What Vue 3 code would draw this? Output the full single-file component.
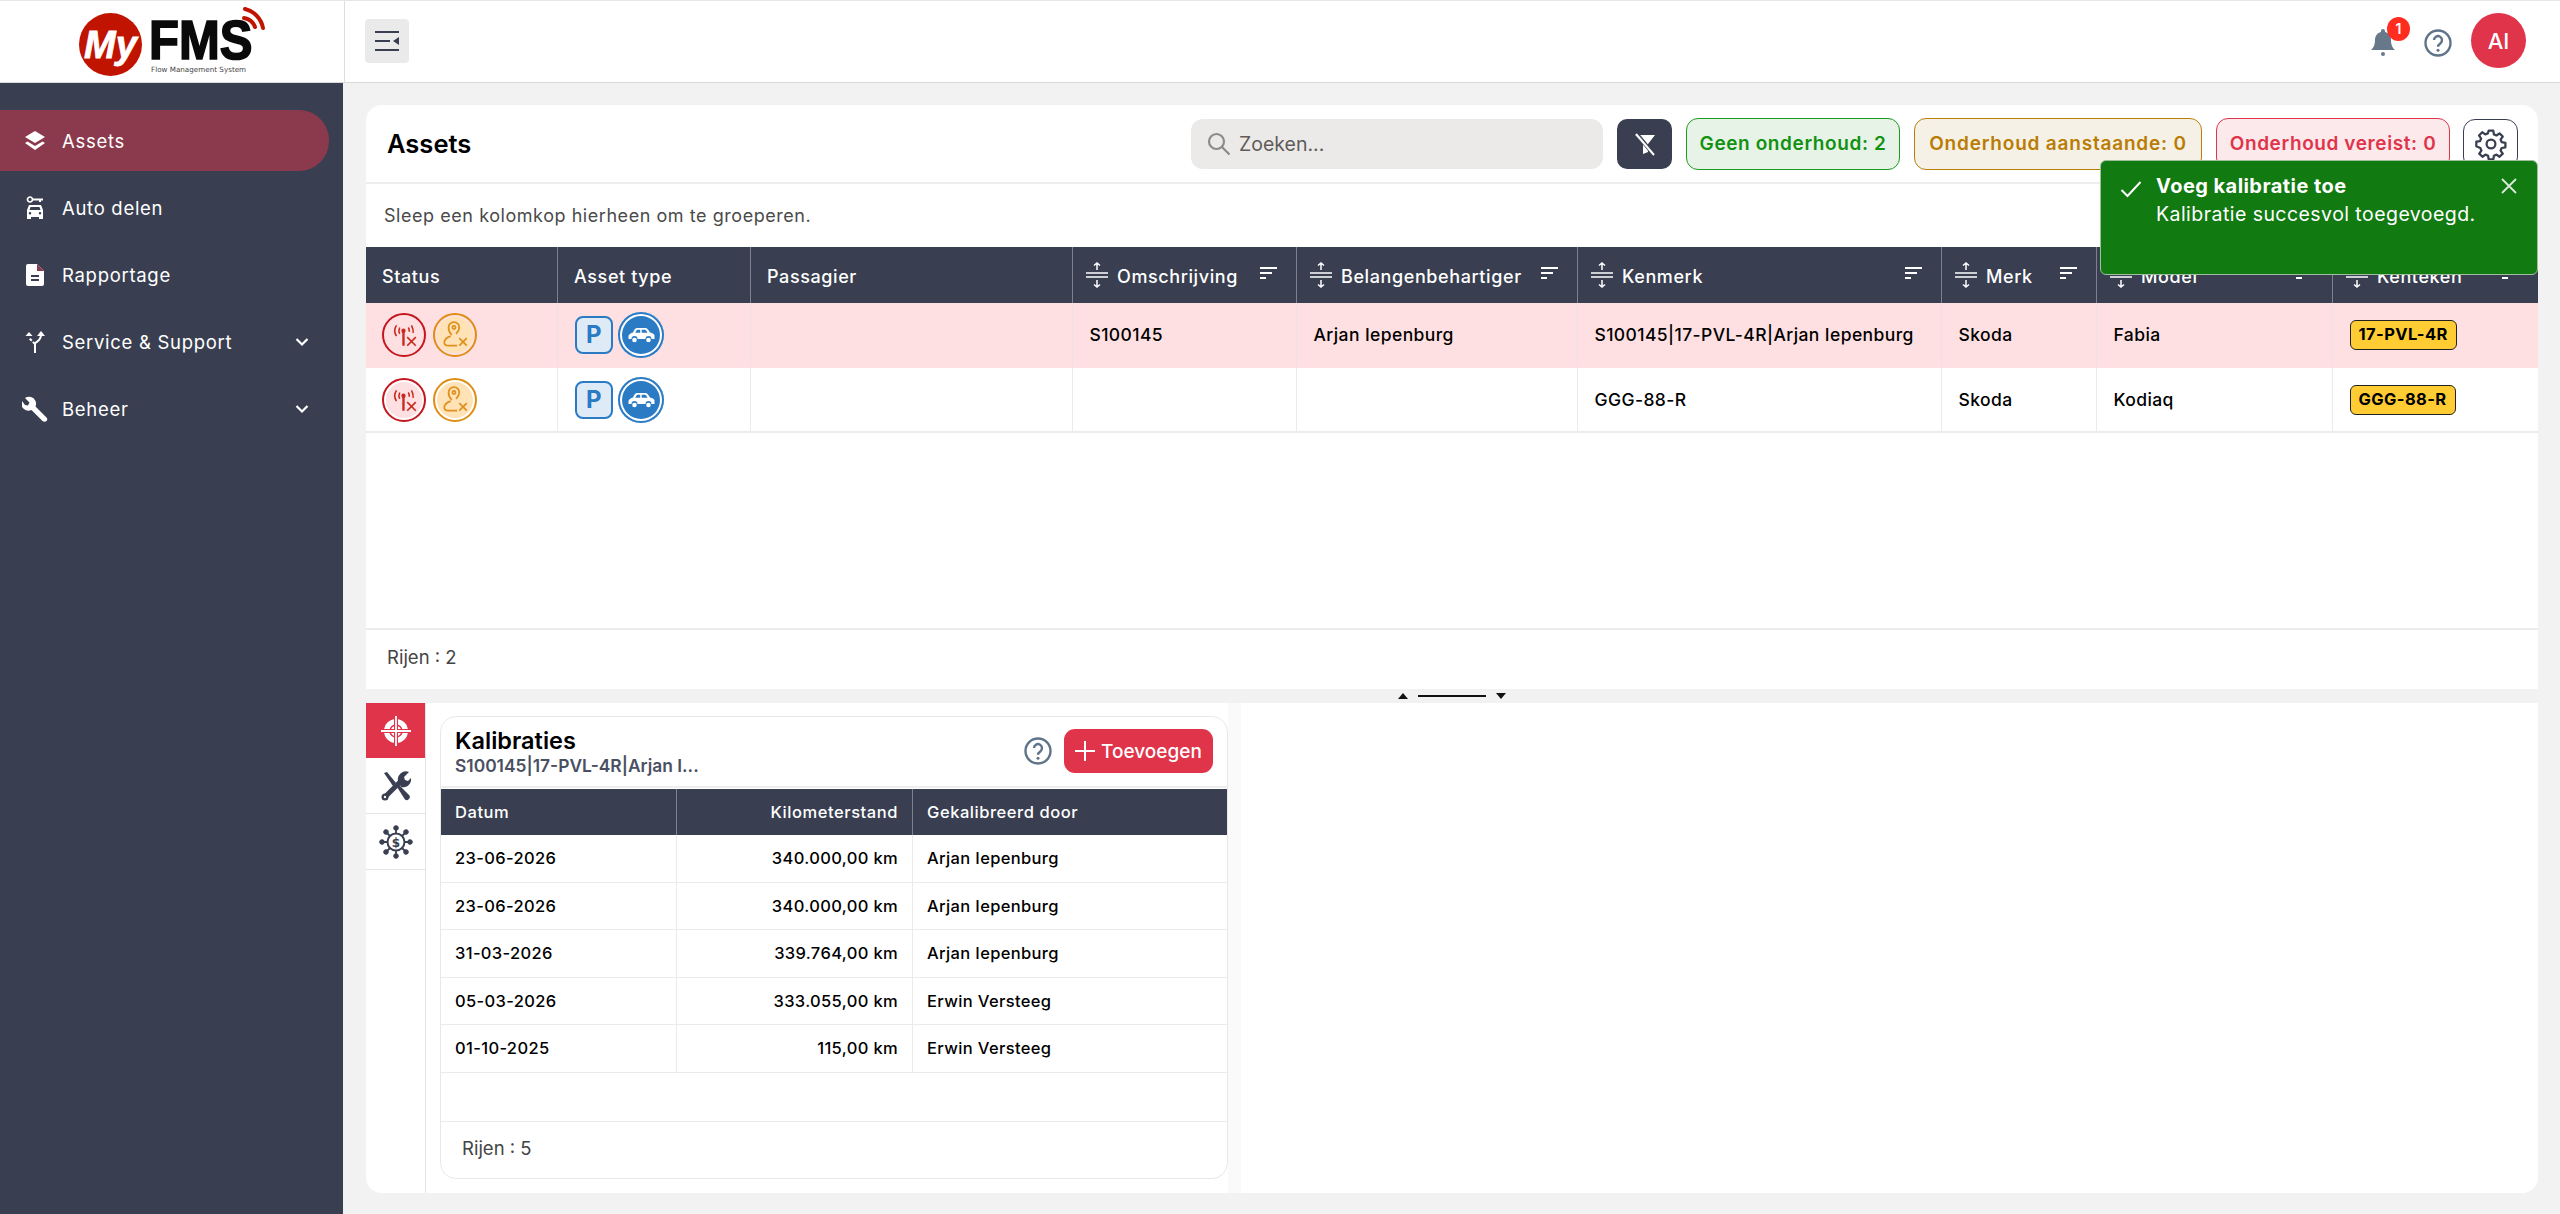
<script setup>
const nav = [
  { label: 'Assets', icon: 'layers', active: true },
  { label: 'Auto delen', icon: 'car' },
  { label: 'Rapportage', icon: 'file' },
  { label: 'Service & Support', icon: 'split', chevron: true },
  { label: 'Beheer', icon: 'wrench', chevron: true }
]
const columns = [
  { label: 'Status' }, { label: 'Asset type' }, { label: 'Passagier' },
  { label: 'Omschrijving', tools: true }, { label: 'Belangenbehartiger', tools: true },
  { label: 'Kenmerk', tools: true }, { label: 'Merk', tools: true },
  { label: 'Model', tools: true }, { label: 'Kenteken', tools: true }
]
const assets = [
  { oms: 'S100145', bel: 'Arjan Iepenburg', ken: 'S100145|17-PVL-4R|Arjan Iepenburg', merk: 'Skoda', model: 'Fabia', plate: '17-PVL-4R', alert: true },
  { oms: '', bel: '', ken: 'GGG-88-R', merk: 'Skoda', model: 'Kodiaq', plate: 'GGG-88-R', alert: false }
]
const calibrations = [
  ['23-06-2026', '340.000,00 km', 'Arjan Iepenburg'],
  ['23-06-2026', '340.000,00 km', 'Arjan Iepenburg'],
  ['31-03-2026', '339.764,00 km', 'Arjan Iepenburg'],
  ['05-03-2026', '333.055,00 km', 'Erwin Versteeg'],
  ['01-10-2025', '115,00 km', 'Erwin Versteeg']
]
</script>

<template>
  <div class="app">
    <header class="topbar">
      <div class="logo">
        <span class="logo-circle"><span class="logo-my">My</span></span>
        <span class="logo-words">
          <span class="logo-fms">FMS</span>
          <span class="logo-tag">Flow Management System</span>
        </span>
        <svg class="logo-wifi" width="24" height="24" viewBox="0 0 24 24"><path d="M2 11a14 14 0 0 1 11 9M3 2a24 24 0 0 1 18 19" fill="none" stroke="#c01400" stroke-width="4" stroke-linecap="round" /></svg>
      </div>
      <div class="topbar-main">
        <button class="toggle">
          <svg width="24" height="24" viewBox="0 0 24 24"><path d="M0 2h24v2H0zM0 11h15v2H0zM0 20h24v2H0z" fill="#393f51" /><path d="M24 8v8l-6-4z" fill="#393f51" /></svg>
        </button>
        <div class="topbar-right">
          <span class="bell">
            <svg width="24" height="28" viewBox="0 0 24 28"><path d="M12 1a2 2 0 0 1 2 2v1c4 1 6 4 6 8 0 6 2 8 4 10H0c2-2 4-4 4-10 0-4 2-7 6-8V3a2 2 0 0 1 2-2z" fill="#66788a" /><circle cx="12" cy="26" r="2" fill="#66788a" /></svg>
            <span class="badge">1</span>
          </span>
          <svg class="help" width="28" height="28" viewBox="0 0 28 28"><circle cx="14" cy="14" r="12.500" fill="none" stroke="#5f7488" stroke-width="2.400" /><path d="M10 11a4 4 0 1 1 6.500 3.200c-1.600 1.200-2.500 2-2.500 3.600" fill="none" stroke="#5f7488" stroke-width="2.400" /><circle cx="14" cy="21.300" r="1.500" fill="#5f7488" /></svg>
          <span class="avatar">AI</span>
        </div>
      </div>
    </header>

    <div class="body">
      <nav class="sidebar">
        <a v-for="n in nav" :key="n.label" class="nav-item" :class="{ active: n.active }">
          <span class="nav-icon">
            <svg v-if="n.icon === 'layers'" width="22" height="22" viewBox="0 0 22 22" fill="#fff"><path d="M11 1l10 6-10 6L1 7z" /><path d="M3.500 11.500L11 16l7.500-4.500L21 13l-10 7L1 13z" /></svg>
            <svg v-else-if="n.icon === 'car'" width="18" height="24" viewBox="0 0 18 24" fill="#fff"><circle cx="4" cy="3.500" r="2.500" fill="none" stroke="#fff" stroke-width="1.700" /><path d="M6 2.500h11v2h-2v1.500h-2V4.500H6z" /><path d="M3 9h12l2 5v9h-4v-2H5v2H1v-9zM4.500 11l-1 3h11l-1-3zM4 16a1 1 0 1 0 0 2.500A1 1 0 0 0 4 16zm10 0a1 1 0 1 0 0 2.500A1 1 0 0 0 14 16z" fill-rule="evenodd" /></svg>
            <svg v-else-if="n.icon === 'file'" width="18" height="22" viewBox="0 0 18 22"><path d="M2 0h9l7 7v13a2 2 0 0 1-2 2H2a2 2 0 0 1-2-2V2a2 2 0 0 1 2-2z" fill="#fff" /><path d="M11 0v7h7z" fill="#8a3a4c" /><path d="M5 11h8v2H5zM5 15h8v2H5z" fill="#393f51" /></svg>
            <svg v-else-if="n.icon === 'split'" width="20" height="22" viewBox="0 0 20 22" fill="none" stroke="#fff" stroke-width="2"><path d="M10 22v-9c0-2 6-3 6-9" /><path d="M10 13L4 7" stroke-dasharray="3 1.500" /><path d="M16 0l4 5h-8z" fill="#fff" stroke="none" /><path d="M4 1l3.500 4h-7z" fill="#fff" stroke="none" /></svg>
            <svg v-else width="26" height="26" viewBox="0 0 26 26" fill="#fff"><path d="M9 1a7 7 0 0 0-6 1l4.500 4.500-1.500 3-3-.5L0 5a7 7 0 0 0 9.500 9l11 11c1 1 3 1 4 0s1-2.500 0-3.500l-11-11A7 7 0 0 0 9 1z" /></svg>
          </span>
          <span class="nav-label">{{ n.label }}</span>
          <svg v-if="n.chevron" class="chev" width="14" height="10" viewBox="0 0 14 10"><path d="M1.500 2L7 7.500 12.500 2" fill="none" stroke="#fff" stroke-width="2.200" /></svg>
        </a>
      </nav>

      <main class="content">
        <section class="assets-card">
          <div class="assets-head">
            <h1>Assets</h1>
            <div class="tools">
              <label class="search">
                <svg width="24" height="24" viewBox="0 0 24 24" fill="none" stroke="#8b8b8b" stroke-width="2.200"><circle cx="9.500" cy="9.500" r="7.500" /><path d="M15 15l7.500 7.500" /></svg>
                <span>Zoeken...</span>
              </label>
              <button class="filter">
                <svg width="24" height="24" viewBox="0 0 24 24"><path d="M2 3h20l-7 9v8l-5 2v-10z" fill="#fff" /><path d="M3 1l18 22" stroke="#393f51" stroke-width="4" /><path d="M3 2l18 21" stroke="#fff" stroke-width="2" /></svg>
              </button>
              <span class="chip green">Geen onderhoud: 2</span>
              <span class="chip amber">Onderhoud aanstaande: 0</span>
              <span class="chip red">Onderhoud vereist: 0</span>
              <button class="gear">
                <svg width="32" height="32" viewBox="0 0 24 24" fill="none" stroke="#393f51" stroke-width="1.700"><circle cx="12" cy="12" r="3.300" /><path d="M10.300 2h3.400l.5 2.800 1.900.8 2.300-1.600 2.400 2.400-1.600 2.300.8 1.900 2.800.5v3.400l-2.800.5-.8 1.900 1.600 2.300-2.400 2.400-2.300-1.600-1.900.8-.5 2.800h-3.400l-.5-2.800-1.900-.8-2.300 1.600-2.400-2.400 1.600-2.300-.8-1.900L1 13.700v-3.400l2.800-.5.8-1.900L3 5.600 5.400 3.200l2.300 1.600 1.900-.8z" stroke-linejoin="round" /></svg>
              </button>
            </div>
          </div>
          <div class="group-hint">Sleep een kolomkop hierheen om te groeperen.</div>

          <div class="grid-row grid-head">
            <div v-for="c in columns" :key="c.label" class="hcell">
              <svg v-if="c.tools" class="collapse" width="22" height="26" viewBox="0 0 22 26" fill="none" stroke="#fff" stroke-width="1.500"><path d="M0 11h22M0 15h22M11 8V1M8 3.500L11 1l3 2.500M11 18v7M8 22.500l3 2.500 3-2.500" /></svg>
              <span>{{ c.label }}</span>
              <svg v-if="c.tools" class="sort" width="17" height="14" viewBox="0 0 17 14"><path d="M0 1h17v2H0zM0 6h12v2H0zM0 11h6v2H0z" fill="#fff" /></svg>
            </div>
          </div>
          <div v-for="a in assets" :key="a.plate" class="grid-row data-row" :class="{ alert: a.alert }">
            <div class="cell icons">
              <span class="status s-red">
                <svg width="30" height="30" viewBox="0 0 28 28" fill="none" stroke="#c92a20" stroke-width="1.500"><path d="M7 5c-2 3-2 7 0 10M10 7c-1 2-1 4 0 6M21 5c1 2 2 4 1.500 7M18 7c.7 1 1 2 1 4" /><circle cx="13.500" cy="10" r="1.300" fill="#c92a20" /><path d="M13.500 11v13" stroke-width="2.200" /><path d="M17 16l8 8M25 16l-8 8" /></svg>
              </span>
              <span class="status s-amber">
                <svg width="30" height="30" viewBox="0 0 28 28" fill="none" stroke="#e0901e" stroke-width="1.600"><path d="M15 13c2-2 3-4 3-6a5 5 0 0 0-10 0c0 2 1 5 3 7" /><circle cx="13" cy="7" r="1.500" /><path d="M10 15c-3 1-6 3-6 6 0 2 2 3 4 3h8" /><path d="M18 17l7 7M25 17l-7 7" /></svg>
              </span>
            </div>
            <div class="cell icons asset-icons">
              <span class="p-box">P</span>
              <span class="car-badge">
                <svg width="27" height="16" viewBox="0 0 27 16"><path d="M9 1h8.500c1.500 0 3 2 4.500 4.500 2.500.5 4.500 1.500 4.500 3V12h-3a3 3 0 0 0-6 0H9.500a3 3 0 0 0-6 0H.500V9c0-1.500 2.500-3 4.500-3.500C6 3 7.500 1 9 1z" fill="#fff" /><path d="M9.500 2.700h2.700v3H7.300c.7-1.400 1.400-3 2.200-3zM13.700 2.700h3.300c.8 0 1.800 1.600 2.600 3h-5.900z" fill="#2a7bc4" /><circle cx="6.500" cy="13" r="2.300" fill="#fff" /><circle cx="20.500" cy="13" r="2.300" fill="#fff" /></svg>
              </span>
            </div>
            <div class="cell"></div>
            <div class="cell">{{ a.oms }}</div>
            <div class="cell">{{ a.bel }}</div>
            <div class="cell">{{ a.ken }}</div>
            <div class="cell">{{ a.merk }}</div>
            <div class="cell">{{ a.model }}</div>
            <div class="cell"><span class="plate">{{ a.plate }}</span></div>
          </div>
          <div class="assets-fill"></div>
          <div class="assets-foot">Rijen : 2</div>
        </section>

        <div class="splitter">
          <i class="tri up"></i><i class="line"></i><i class="tri down"></i>
        </div>

        <section class="detail">
          <div class="rail">
            <button class="tab on">
              <svg width="32" height="32" viewBox="0 0 32 32"><circle cx="16" cy="16" r="12" fill="#fff" /><circle cx="16" cy="16" r="6" fill="none" stroke="#e0344a" stroke-width="1.500" /><path d="M0 16h32M16 0v32" stroke="#e0344a" stroke-width="4" /><path d="M1 16h30M16 1v30" stroke="#fff" stroke-width="1.800" /></svg>
            </button>
            <button class="tab">
              <svg width="32" height="32" viewBox="0 0 32 32"><path d="M4 3l3-1 9 11-3 3z" fill="#393f51" /><path d="M17 17l2-2 10 10c1.500 1.500 1 3-.3 4.200-1.300 1.200-2.700 1.300-3.900 0z" fill="#393f51" /><path d="M5 27L22 10" stroke="#393f51" stroke-width="5" /><path d="M18 11a8 8 0 0 1 11-9l-5 5 1 3 3 1 3-3a8 8 0 0 1-10 9z" fill="#393f51" /><circle cx="5" cy="27" r="3.500" fill="#393f51" /><circle cx="5" cy="27" r="1.200" fill="#fff" /></svg>
            </button>
            <button class="tab">
              <svg width="34" height="34" viewBox="0 0 34 34" fill="#393f51" stroke="#393f51"><circle cx="17" cy="17" r="8.500" fill="none" stroke-width="2" /><path d="M17 2v7M17 25v7M2 17h7M25 17h7M6 6l5 5M23 23l5 5M28 6l-5 5M11 23l-5 5" stroke-width="1.800" /><circle cx="17" cy="3" r="2.300" /><circle cx="17" cy="31" r="2.300" /><circle cx="3" cy="17" r="2.300" /><circle cx="31" cy="17" r="2.300" /><circle cx="7" cy="7" r="2.300" /><circle cx="27" cy="27" r="2.300" /><circle cx="27" cy="7" r="2.300" /><circle cx="7" cy="27" r="2.300" /><text x="17" y="22" text-anchor="middle" class="dollar" stroke="none">$</text></svg>
            </button>
          </div>
          <div class="calib">
            <div class="calib-head">
              <div class="calib-title">
                <h2>Kalibraties</h2>
                <p>S100145|17-PVL-4R|Arjan I...</p>
              </div>
              <svg class="help" width="28" height="28" viewBox="0 0 28 28"><circle cx="14" cy="14" r="12.500" fill="none" stroke="#5f7488" stroke-width="2.400" /><path d="M10 11a4 4 0 1 1 6.500 3.200c-1.600 1.200-2.500 2-2.500 3.600" fill="none" stroke="#5f7488" stroke-width="2.400" /><circle cx="14" cy="21.300" r="1.500" fill="#5f7488" /></svg>
              <button class="add">
                <svg width="20" height="20" viewBox="0 0 20 20"><path d="M9 0h2v9h9v2h-9v9H9v-9H0V9h9z" fill="#fff" /></svg>
                Toevoegen
              </button>
            </div>
            <div class="ctable ctable-head">
              <div>Datum</div><div class="num">Kilometerstand</div><div>Gekalibreerd door</div>
            </div>
            <div v-for="(r, i) in calibrations" :key="i" class="ctable crow">
              <div>{{ r[0] }}</div><div class="num">{{ r[1] }}</div><div>{{ r[2] }}</div>
            </div>
            <div class="cempty"></div>
            <div class="cfoot">Rijen : 5</div>
          </div>
          <div class="gutter"></div>
          <div class="second"></div>
        </section>
      </main>
    </div>

    <aside class="toast">
      <svg class="check" width="22" height="18" viewBox="0 0 22 18"><path d="M1.500 10l6 6L20.500 2" fill="none" stroke="#fff" stroke-width="2" /></svg>
      <div class="toast-text">
        <strong>Voeg kalibratie toe</strong>
        <span>Kalibratie succesvol toegevoegd.</span>
      </div>
      <svg class="close" width="16" height="16" viewBox="0 0 16 16"><path d="M1 1l14 14M15 1L1 15" stroke="#fff" stroke-width="1.800" opacity=".85" /></svg>
    </aside>
  </div>
</template>

<style scoped>
.app { position: relative; height: 1214px; overflow: hidden; background: #f2f2f2; font-family: Inter, "Noto Sans", sans-serif; color: #000; }
svg { display: block; flex: none; }
button { border: 0; padding: 0; cursor: pointer; font: inherit; }
h1, h2, p { margin: 0; }

.topbar { display: flex; height: 83px; background: #fff; border-top: 1px solid #e6e6e6; border-bottom: 1px solid #d9d9d9; box-sizing: border-box; }
.logo { position: relative; width: 345px; height: 81px; border-right: 1px solid #dedede; box-sizing: border-box; display: flex; align-items: flex-start; padding: 12px 0 0 79px; gap: 7px; }
.logo-circle { width: 63px; height: 63px; border-radius: 50%; background: #c01400; display: flex; align-items: center; justify-content: center; flex: none; }
.logo-my { font: italic bold 38px/1 "Liberation Sans", sans-serif; color: #fff; -webkit-text-stroke: .8px #fff; }
.logo-words { display: flex; flex-direction: column; align-items: flex-start; }
.logo-fms { font: bold 49px/40px "Liberation Sans", sans-serif; color: #0a0a0a; -webkit-text-stroke: 1.500px #0a0a0a; transform: scaleY(1.140); transform-origin: 0 100%; margin-top: 9px; height: 40px; }
.logo-tag { font: 7.200px/10px "DejaVu Sans", sans-serif; color: #444; margin: 3px 0 0 2px; white-space: nowrap; }
.logo-wifi { position: absolute; left: 242px; top: 6px; }
.topbar-main { flex: 1; display: flex; align-items: center; justify-content: space-between; padding: 0 34px 2px 20px; }
.toggle { width: 44px; height: 44px; border-radius: 4px; background: #eaeaea; display: flex; align-items: center; justify-content: center; }
.topbar-right { display: flex; align-items: center; }
.bell { position: relative; margin-right: 30px; margin-top: 2px; left: 2px; }
.badge { position: absolute; left: 16px; top: -11px; width: 23px; height: 24px; border-radius: 50%; background: #ff2d1f; color: #fff; font-size: 14px; font-weight: 600; text-align: center; line-height: 24px; }
.topbar-right .help { margin-right: 20px; margin-top: 4px; position: relative; left: 1px; }
.avatar { width: 55px; height: 55px; border-radius: 50%; background: #e0344a; color: #fff; font-size: 22px; font-weight: 500; display: flex; align-items: center; justify-content: center; }

.body { display: flex; height: 1131px; }
.sidebar { width: 343px; flex: none; background: #393f51; padding-top: 27px; box-sizing: border-box; display: flex; flex-direction: column; gap: 6.200px; }
.nav-item { height: 61px; width: 329px; display: flex; align-items: center; color: #fff; font-size: 18.500px; letter-spacing: .7px; border-radius: 0 30px 30px 0; padding-right: 20px; box-sizing: border-box; }
.nav-item.active { background: #8a3a4c; }
.nav-icon { width: 62px; display: flex; justify-content: center; box-sizing: border-box; padding-left: 8px; }
.nav-label { flex: 1; }

.content { flex: 1; padding: 22px 22px 21px 23px; display: flex; flex-direction: column; min-width: 0; }
.assets-card { height: 584px; background: #fff; border-radius: 16px 16px 0 0; display: flex; flex-direction: column; flex: none; overflow: hidden; }
.assets-head { height: 79px; flex: none; display: flex; align-items: center; justify-content: space-between; padding: 0 20px 0 21px; border-bottom: 2px solid #eee; box-sizing: border-box; }
h1 { font-size: 25.500px; font-weight: 600; }
.tools { display: flex; align-items: center; gap: 14px; }
.search { width: 412px; height: 50px; border-radius: 12px; background: #ebeae8; display: flex; align-items: center; gap: 8px; padding-left: 16px; box-sizing: border-box; font-size: 19.500px; color: #5f5b58; }
.filter { width: 55px; height: 50px; border-radius: 10px; background: #393f51; display: flex; align-items: center; justify-content: center; }
.chip { height: 52px; border-radius: 12px; border: 1.500px solid; box-sizing: border-box; display: flex; align-items: center; justify-content: center; font-size: 19px; letter-spacing: .6px; font-weight: 600; white-space: nowrap; }
.chip.green { width: 214px; color: #129112; border-color: #1f9b1f; background: #e8f3e8; }
.chip.amber { width: 288px; letter-spacing: .8px; color: #b97c05; border-color: #bb7f08; background: #f5f1e6; }
.chip.red { width: 234px; color: #e0344a; border-color: #e0344a; background: #fbe9eb; }
.gear { width: 55px; height: 50px; margin-left: -1px; border-radius: 12px; border: 1.500px solid #393f51; background: #fff; display: flex; align-items: center; justify-content: center; box-sizing: border-box; }
.group-hint { height: 63px; flex: none; display: flex; align-items: center; padding-left: 18px; font-size: 18px; letter-spacing: .55px; color: #4a4a4a; box-sizing: border-box; }

.grid-row { display: grid; grid-template-columns: 191px 193px 322px 224px 281px 364px 155px 236px 206px; flex: none; }
.grid-head { height: 56px; background: #393f51; color: #fff; font-size: 18px; letter-spacing: .6px; font-weight: 500; }
.hcell { display: flex; align-items: center; padding: 2px 14px 0 16px; border-left: 1px solid #7d818d; min-width: 0; box-sizing: border-box; white-space: nowrap; }
.hcell .collapse { margin: -2px 9px 0 -3px; }
.hcell:first-child { border-left: 0; }
.hcell .sort { margin-left: auto; margin-top: -6px; margin-right: 5px; }
.data-row { height: 65px; border-bottom: 2px solid #ececec; box-sizing: border-box; font-size: 17.500px; letter-spacing: .4px; font-weight: 450; }
.data-row.alert { background: #ffe0e2; border-bottom-color: #ffe0e2; }
.cell { display: flex; align-items: center; padding: 0 17px 0 16.500px; border-left: 1.500px solid #ebebeb; box-sizing: border-box; white-space: nowrap; min-width: 0; }
.cell:first-child { border-left: 0; padding-left: 16px; }
.alert .cell { border-left-color: #f0e0e1; }
.icons { gap: 7px; }
.asset-icons { padding-left: 17px; }
.status { width: 44px; height: 44px; border-radius: 50%; display: flex; align-items: center; justify-content: center; border: 2px solid; box-sizing: border-box; box-shadow: inset 0 0 0 2px #fff; }
.alert .status { box-shadow: none; }
.s-red { border-color: #c4161c; background: #ffe0e2; }
.s-amber { border-color: #de8e16; background: #ffe2b5; }
.alert .s-amber { box-shadow: inset 0 0 0 2px #ffe0e2; }
.p-box { width: 38px; height: 38px; border: 2px solid #2a7bc4; border-radius: 8px; background: #deebf7; color: #2a7bc4; font-size: 24px; font-weight: 700; display: flex; align-items: center; justify-content: center; box-sizing: border-box; }
.car-badge { width: 46px; height: 46px; border-radius: 50%; background: #2a7bc4; box-shadow: inset 0 0 0 2px #2a7bc4, inset 0 0 0 4px #fff; display: flex; align-items: center; justify-content: center; margin-left: -2px; }
.plate { display: inline-block; height: 30px; line-height: 27px; padding: 0 8px; background: #ffcc33; border: 1.500px solid #222; border-radius: 6px; box-sizing: border-box; font-size: 16.500px; font-weight: 700; letter-spacing: .4px; }
.assets-fill { flex: 1; }
.assets-foot { height: 61px; flex: none; border-top: 2px solid #ececec; display: flex; align-items: center; padding: 0 0 6px 21px; font-size: 18.500px; color: #444; box-sizing: border-box; }

.splitter { height: 14px; flex: none; display: flex; align-items: center; justify-content: center; gap: 10px; }
.tri { width: 0; height: 0; border-left: 5px solid transparent; border-right: 5px solid transparent; }
.tri.up { border-bottom: 6px solid #111; }
.tri.down { border-top: 6px solid #111; }
.line { width: 68px; height: 2px; background: #111; }

.detail { flex: 1; display: flex; background: #fff; border-radius: 0 0 16px 16px; overflow: hidden; min-height: 0; }
.rail { width: 60px; flex: none; border-right: 1px solid #e4e4e4; box-sizing: border-box; display: flex; flex-direction: column; }
.tab { height: 56px; width: 100%; background: #fff; display: flex; align-items: center; justify-content: center; border-bottom: 1px solid #e4e4e4; flex: none; }
.tab.on { height: 55px; background: #e0344a; border-bottom: 0; }
.calib { width: 788px; flex: none; margin: 13px 0 14px 14px; border: 1.500px solid #e8e8e8; border-radius: 16px; box-sizing: border-box; display: flex; flex-direction: column; overflow: hidden; }
.calib-head { height: 71px; flex: none; display: flex; align-items: center; padding: 0 14px 1px 14px; border-bottom: 2px solid #eee; box-sizing: border-box; }
.calib-title { flex: 1; min-width: 0; }
h2 { font-size: 23.500px; font-weight: 600; line-height: 28px; }
.calib-title p { font-size: 17.400px; font-weight: 600; color: #4a5062; line-height: 21px; }
.add { margin-left: 12px; width: 149px; height: 44px; border-radius: 11px; background: #e0344a; color: #fff; font-size: 19px; font-weight: 500; display: flex; align-items: center; justify-content: center; gap: 6px; }
.ctable { display: grid; grid-template-columns: 235px 236px 1fr; flex: none; }
.ctable > div { display: flex; align-items: center; padding: 0 14px; box-sizing: border-box; white-space: nowrap; }
.ctable > div + div { border-left: 1.500px solid #ebebeb; }
.ctable > .num { justify-content: flex-end; }
.ctable-head { height: 46px; margin-top: 1px; background: #393f51; color: #fff; font-size: 16.500px; letter-spacing: .55px; font-weight: 500; }
.ctable-head > div + div { border-left-color: #7d818d; }
.crow { height: 47.500px; border-bottom: 1.500px solid #ebebeb; box-sizing: border-box; font-size: 16.500px; letter-spacing: .35px; font-weight: 450; }
.cempty { height: 48px; flex: none; border-bottom: 1.500px solid #ebebeb; }
.cfoot { flex: 1; display: flex; align-items: center; padding: 0 0 3px 21px; font-size: 18.500px; color: #444; }
.gutter { width: 13px; flex: none; background: #fafafa; }
.second { flex: 1; background: #fff; }
.dollar { font: bold 12px "DejaVu Sans", sans-serif; fill: #393f51; }

.toast { position: absolute; left: 2100px; top: 160px; width: 438px; height: 115px; background: #117a11; border: 1px solid #9fbf9f; border-radius: 6px; box-sizing: border-box; color: #fff; display: flex; align-items: flex-start; padding: 13px 20px 0 19px; }
.toast .check { margin: 6px 14px 0 0; }
.toast-text { flex: 1; display: flex; flex-direction: column; gap: 4px; font-size: 19.500px; letter-spacing: .45px; }
.toast-text strong { font-weight: 700; font-size: 20px; }
.toast .close { margin: 4px 0 0; }
</style>

<style>
body { margin: 0; background: #f2f2f2; }
</style>
